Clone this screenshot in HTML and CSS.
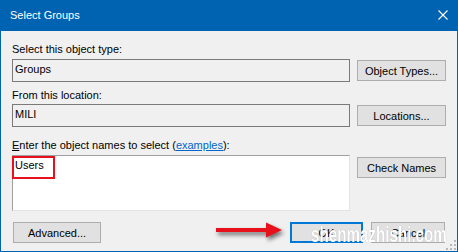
FILE: index.html
```html
<!DOCTYPE html>
<html lang="en">
<head>
    <meta charset="UTF-8">
    <meta name="viewport" content="width=device-width, initial-scale=1.0">
    <title>Select Groups</title>
    <link rel="stylesheet" href="styles.css">
</head>
<body>
    <div class="window">
        <!-- Title Bar -->
        <div class="titlebar">
            <span class="title">Select Groups</span>
            <svg class="close-icon" width="10" height="10" viewBox="0 0 10 10">
                <path d="M0.5 0.5 L9.5 9.5 M9.5 0.5 L0.5 9.5" stroke="#ffffff" stroke-width="1.1" fill="none"/>
            </svg>
        </div>

        <!-- Dialog Content -->
        <div class="content">
            <div class="label">Select this object type:</div>
            <div class="field-row">
                <div class="textbox">Groups</div>
                <button class="btn">Object Types...</button>
            </div>

            <div class="label label-location">From this location:</div>
            <div class="field-row">
                <div class="textbox">MILI</div>
                <button class="btn">Locations...</button>
            </div>

            <div class="label label-names"><u>E</u>nter the object names to select (<a class="link" href="#">examples</a>):</div>
            <div class="field-row names-row">
                <div class="names-box">
                    <span>Users</span>
                    <div class="highlight"></div>
                </div>
                <button class="btn btn-check">Check Names</button>
            </div>

            <div class="button-row">
                <button class="btn btn-advanced">Advanced...</button>
                <div class="spacer"></div>
                <button class="btn btn-ok">OK</button>
                <button class="btn btn-cancel">Cancel</button>
            </div>
        </div>

        <!-- Annotation arrow -->
        <svg class="arrow" width="80" height="30" viewBox="0 0 80 30">
            <rect x="4" y="10" width="52" height="4" fill="#e8101a"/>
            <polygon points="54,4.5 70,12 54,19.5" fill="#e8101a"/>
        </svg>

        <div class="watermark">shenmazhishi.com</div>

        <!-- Resize grip -->
        <svg class="grip" width="12" height="12" viewBox="0 0 12 12">
            <rect x="9" y="1" width="2" height="2" fill="#b8b8b8"/>
            <rect x="5" y="5" width="2" height="2" fill="#b8b8b8"/>
            <rect x="9" y="5" width="2" height="2" fill="#b8b8b8"/>
            <rect x="1" y="9" width="2" height="2" fill="#b8b8b8"/>
            <rect x="5" y="9" width="2" height="2" fill="#b8b8b8"/>
            <rect x="9" y="9" width="2" height="2" fill="#b8b8b8"/>
        </svg>
    </div>
</body>
</html>
```

FILE: styles.css
```css
/* --- GENERAL --- */
body {
    margin: 0;
    font-family: "Liberation Sans", Arial, sans-serif;
    font-size: 11px;
    color: #000;
}

.window {
    position: relative;
    width: 458px;
    height: 252px;
    box-sizing: border-box;
    border: 1px solid #0063b1;
    border-top: none;
    background: #f0f0f0;
    overflow: hidden;
}

/* --- TITLE BAR --- */
.titlebar {
    display: flex;
    align-items: center;
    justify-content: space-between;
    height: 31px;
    padding: 0 9px;
    background: #0063b1;
    color: #fff;
    line-height: 31px;
}

.close-icon {
    margin-right: 0;
    margin-top: -1px;
}

/* --- CONTENT --- */
.content {
    padding: 11px 11px 0 11px;
}

.label {
    line-height: 14px;
    margin-bottom: 3px;
}

.label-location {
    margin-top: 6px;
    margin-bottom: 2px;
}

.label-names {
    margin-top: 11px;
}

.link {
    color: #0066cc;
}

.field-row {
    display: grid;
    grid-template-columns: 338px 89px;
    column-gap: 7px;
    align-items: center;
}

.textbox {
    height: 23px;
    box-sizing: border-box;
    border: 1px solid #7a7a7a;
    padding: 1px 2px;
    line-height: 17px;
    background: #f0f0f0;
}

/* --- NAMES BOX --- */
.names-row {
    align-items: start;
}

.names-box {
    position: relative;
    height: 56px;
    box-sizing: border-box;
    background: #fff;
    border: 1px solid;
    border-color: #a0a0a0 #e3e3e3 #e3e3e3 #a0a0a0;
    padding: 2px 2px;
    line-height: 14px;
}

.highlight {
    position: absolute;
    left: -1px;
    top: 0;
    width: 43px;
    height: 23px;
    box-sizing: border-box;
    border: 2px solid #e8101a;
}

/* --- BUTTONS --- */
.btn {
    height: 21px;
    box-sizing: border-box;
    padding: 0;
    font: inherit;
    color: #000;
    background: #e1e1e1;
    border: 1px solid #adadad;
}

.btn-check {
    margin-top: 2px;
}

.button-row {
    display: flex;
    margin-top: 11px;
    padding-left: 1px;
    gap: 8px;
}

.btn-advanced {
    width: 88px;
}

.spacer {
    flex: 1;
}

.btn-ok {
    width: 73px;
    border: 2px solid #0078d7;
}

.btn-cancel {
    width: 74px;
    margin-right: 1px;
}

/* --- OVERLAYS --- */
.arrow {
    position: absolute;
    left: 211px;
    top: 218px;
    filter: drop-shadow(2px 3px 2px rgba(0, 0, 0, 0.55));
}

.watermark {
    position: absolute;
    left: 310px;
    top: 224px;
    font-size: 22px;
    font-weight: bold;
    line-height: 22px;
    color: #fff;
    white-space: nowrap;
    transform: scaleX(0.69);
    transform-origin: left top;
    text-shadow: 0 0 1px rgba(0, 0, 0, 0.35);
}

.grip {
    position: absolute;
    left: 444px;
    top: 239px;
}
```
